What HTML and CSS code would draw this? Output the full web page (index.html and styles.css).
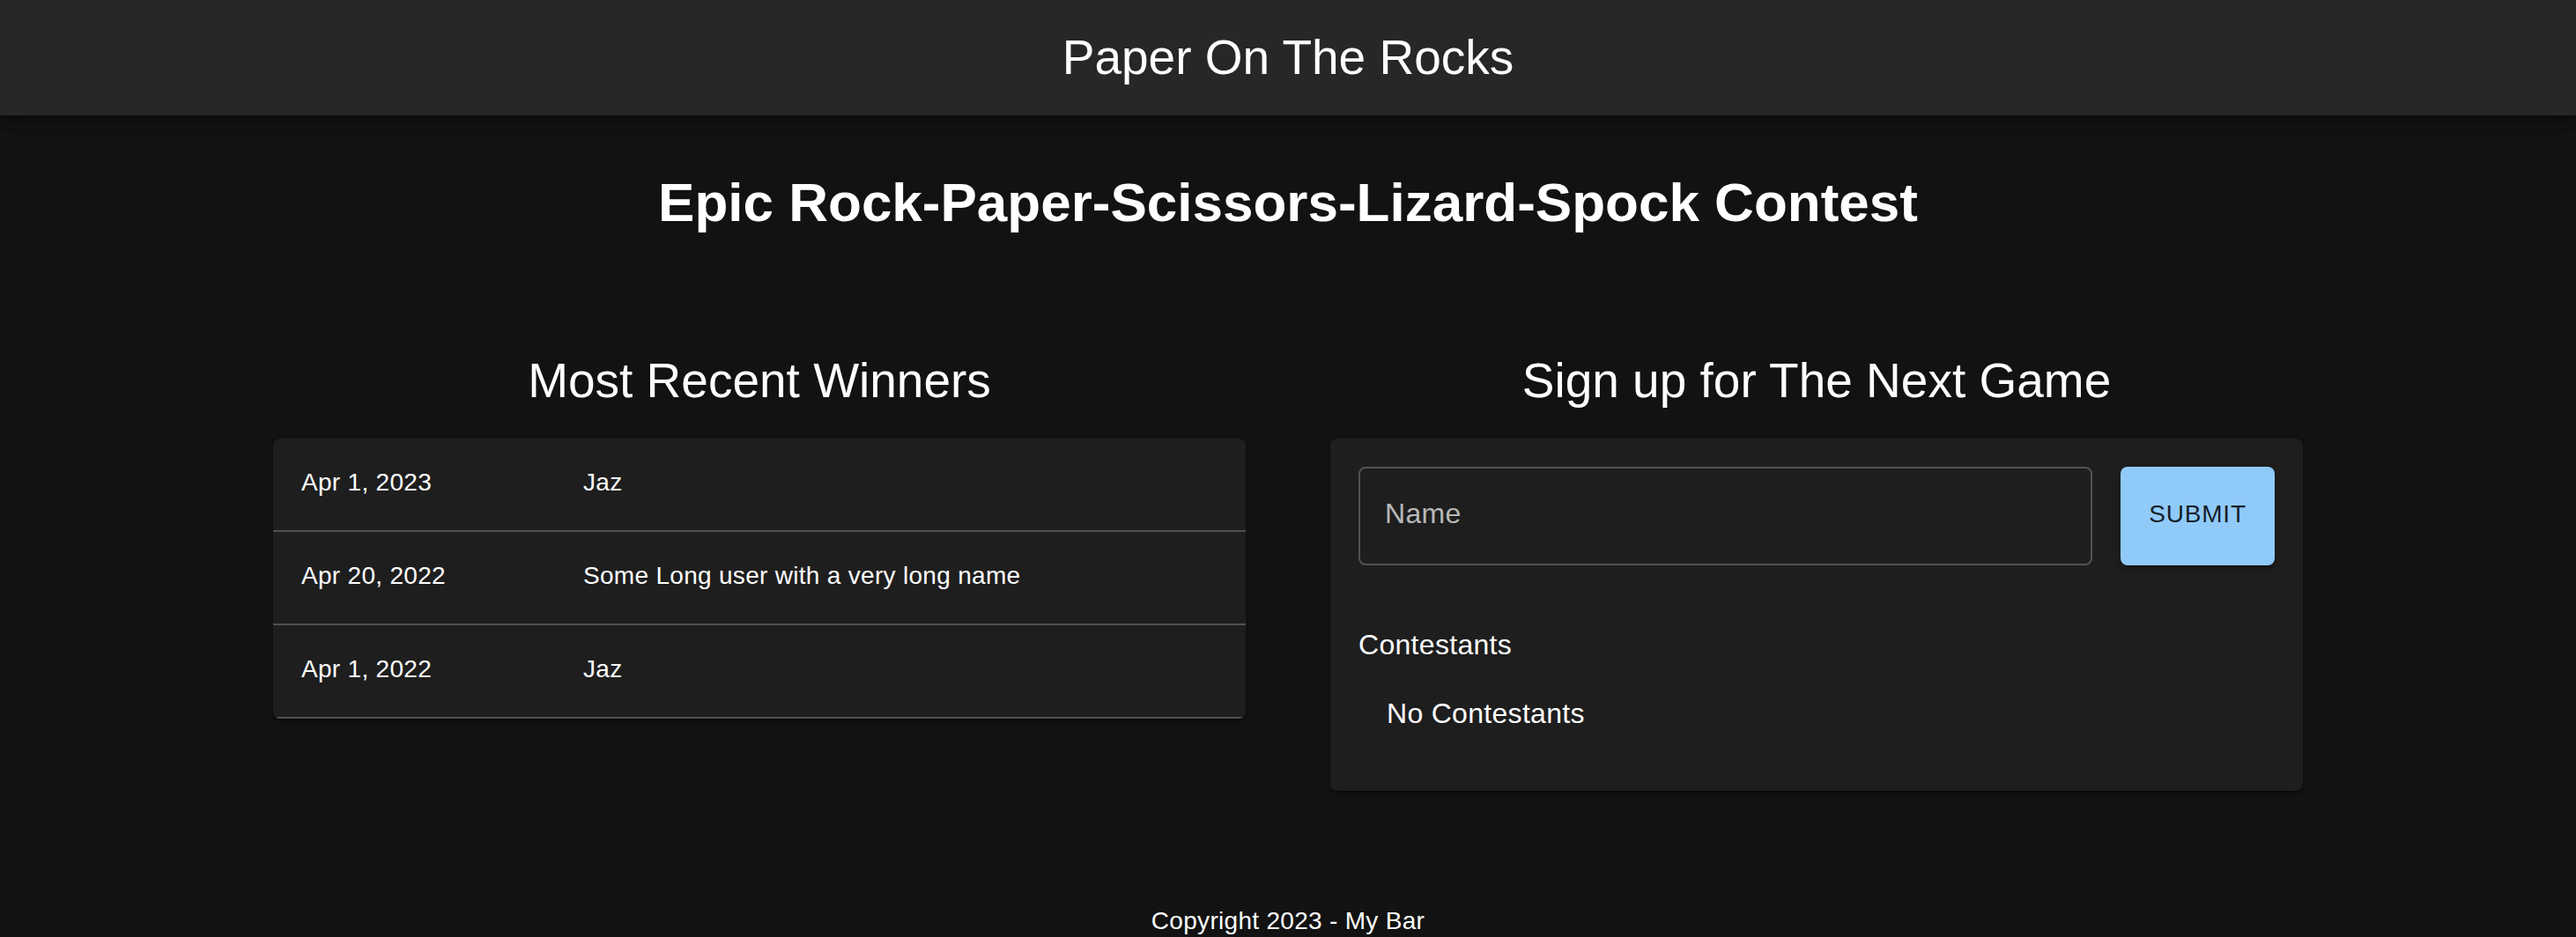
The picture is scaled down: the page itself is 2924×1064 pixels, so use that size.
FILE: index.html
```html
<!DOCTYPE html>
<html lang="en">
<head>
<meta charset="utf-8">
<title>Paper On The Rocks</title>
<link rel="stylesheet" href="styles.css">
</head>
<body>
<header class="appbar">
  <span class="appbar-title">Paper On The Rocks</span>
</header>
<main class="page">
  <h1 class="page-title">Epic Rock-Paper-Scissors-Lizard-Spock Contest</h1>
  <div class="columns">
    <section class="column">
      <h2 class="section-title">Most Recent Winners</h2>
      <div class="card winners">
        <div class="row"><div class="cell">Apr 1, 2023</div><div class="cell">Jaz</div></div>
        <div class="row"><div class="cell">Apr 20, 2022</div><div class="cell">Some Long user with a very long name</div></div>
        <div class="row"><div class="cell">Apr 1, 2022</div><div class="cell">Jaz</div></div>
      </div>
    </section>
    <section class="column">
      <h2 class="section-title">Sign up for The Next Game</h2>
      <div class="card signup">
        <form class="signup-form">
          <input class="name-input" type="text" placeholder="Name">
          <button class="submit" type="button">Submit</button>
        </form>
        <div class="contestants-title">Contestants</div>
        <ul class="contestants">
          <li class="contestant">No Contestants</li>
        </ul>
      </div>
    </section>
  </div>
</main>
<footer class="footer">Copyright 2023 - My Bar</footer>
</body>
</html>
```
FILE: styles.css
```css
html, body {
  margin: 0;
  padding: 0;
}
body {
  background: #121212;
  color: #ffffff;
  font-family: "Liberation Sans", Arial, sans-serif;
}
.appbar {
  position: relative;
  z-index: 1;
  height: 131px;
  background: #272727;
  display: flex;
  align-items: center;
  justify-content: center;
  box-shadow: 0 4px 8px -2px rgba(0,0,0,0.2), 0 8px 10px 0 rgba(0,0,0,0.14), 0 2px 20px 0 rgba(0,0,0,0.12);
}
.appbar-title {
  font-size: 55px;
  line-height: 1;
}
.page {
  padding-top: 62px;
}
.page-title {
  margin: 0;
  font-size: 62px;
  font-weight: 700;
  line-height: 74px;
  text-align: center;
}
.columns {
  width: 2304px;
  margin: 132px auto 0;
  display: grid;
  grid-template-columns: 1fr 1fr;
  column-gap: 96px;
  align-items: start;
}
.section-title {
  margin: 0 0 33px;
  font-size: 55px;
  font-weight: 400;
  line-height: 66px;
  text-align: center;
}
.card {
  background: #1e1e1e;
  border-radius: 8px;
  box-shadow: 0 4px 2px -2px rgba(0,0,0,0.2), 0 2px 2px 0 rgba(0,0,0,0.14), 0 2px 6px 0 rgba(0,0,0,0.12);
}
.winners {
  overflow: hidden;
}
.row {
  display: grid;
  grid-template-columns: 320px 1fr;
  border-bottom: 2px solid #515151;
}
.cell {
  padding: 30px 32px 34px;
  font-size: 28px;
  line-height: 40px;
  letter-spacing: 0.3px;
}
.signup {
  padding: 32px;
}
.signup-form {
  display: flex;
  gap: 32px;
  margin: 0;
}
.name-input {
  flex: 1;
  min-width: 0;
  height: 112px;
  box-sizing: border-box;
  border: 2px solid rgba(255,255,255,0.23);
  border-radius: 8px;
  background: transparent;
  padding: 0 28px 6px;
  font-family: "Liberation Sans", Arial, sans-serif;
  font-size: 32px;
  letter-spacing: 0.3px;
  color: #ffffff;
  outline: none;
}
.name-input::placeholder {
  color: rgba(255,255,255,0.7);
  opacity: 1;
}
.submit {
  width: 175px;
  height: 112px;
  border: 0;
  border-radius: 8px;
  background: #90caf9;
  color: rgba(0,0,0,0.87);
  font-family: "Liberation Sans", Arial, sans-serif;
  font-size: 28px;
  letter-spacing: 0.8px;
  text-transform: uppercase;
  padding: 0 0 4px;
  box-shadow: 0 6px 2px -4px rgba(0,0,0,0.2), 0 4px 4px 0 rgba(0,0,0,0.14), 0 2px 10px 0 rgba(0,0,0,0.12);
}
.contestants-title {
  margin-top: 66px;
  font-size: 32px;
  line-height: 48px;
  letter-spacing: 0.3px;
}
.contestants {
  list-style: none;
  margin: 0;
  padding: 14px 0 16px;
}
.contestant {
  padding: 16px 32px;
  font-size: 32px;
  line-height: 48px;
  letter-spacing: 0.3px;
}
.footer {
  margin-top: 128px;
  text-align: center;
  font-size: 28px;
  line-height: 40px;
  letter-spacing: 0.3px;
}
```
